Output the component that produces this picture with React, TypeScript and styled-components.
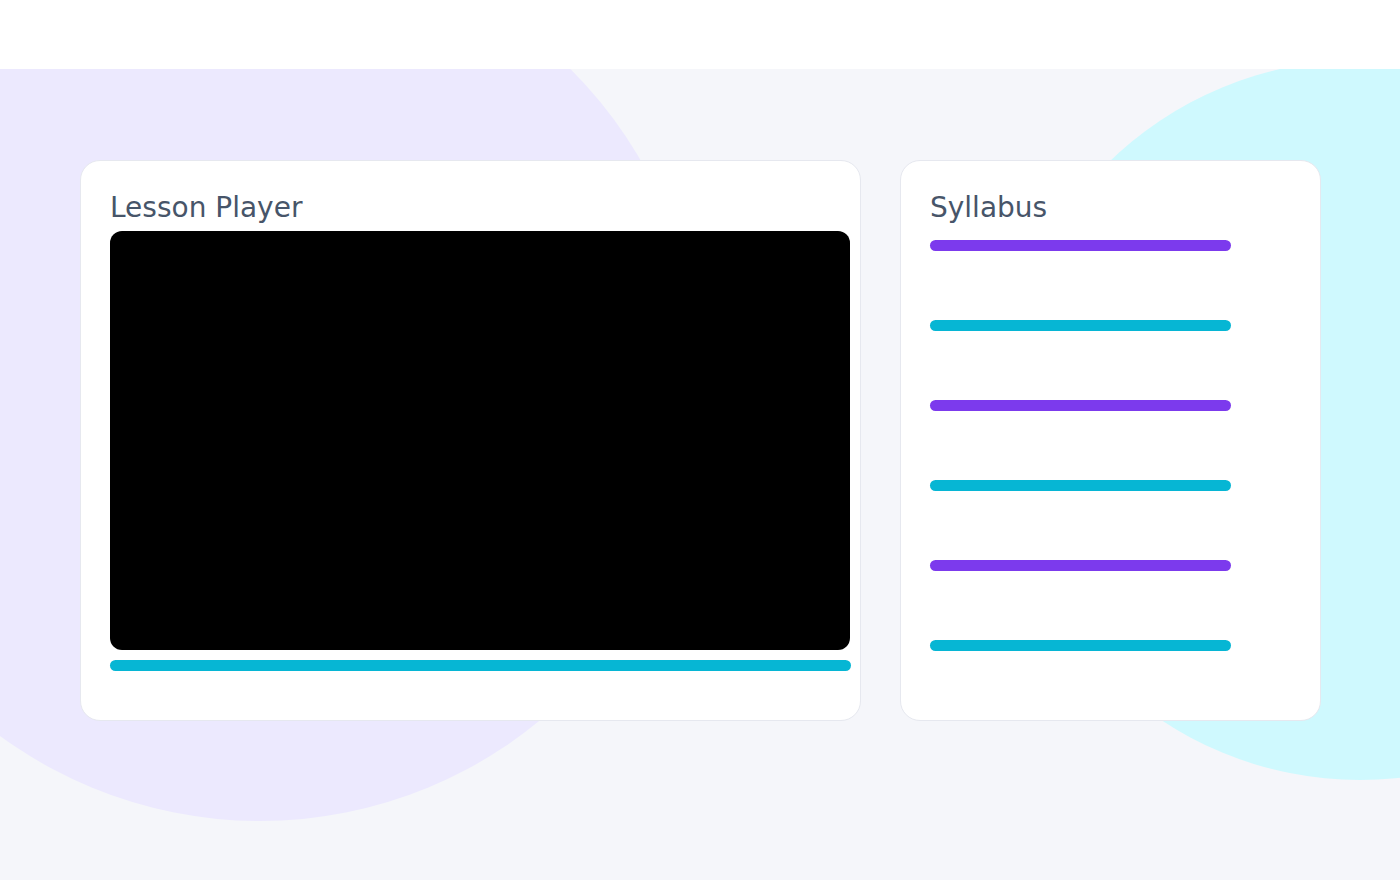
import React from "react";
import styled, { createGlobalStyle } from "styled-components";

const GlobalStyle = createGlobalStyle`
  * {
    box-sizing: border-box;
  }

  body {
    margin: 0;
    background: #f5f6fa;
    font-family: "DejaVu Sans", "Noto Sans", sans-serif;
  }
`;

const Header = styled.header`
  height: 69px;
  background: #ffffff;
  position: relative;
  z-index: 2;
`;

const Main = styled.main`
  position: relative;
  overflow: hidden;
  min-height: 811px;
  padding: 91px 80px;
`;

const Blob = styled.div<{ $size: number; $left: number; $top: number; $color: string }>`
  position: absolute;
  left: ${(p) => p.$left}px;
  top: ${(p) => p.$top}px;
  width: ${(p) => p.$size}px;
  height: ${(p) => p.$size}px;
  border-radius: 50%;
  background: ${(p) => p.$color};
  z-index: 0;
`;

const Layout = styled.div`
  position: relative;
  z-index: 1;
  display: grid;
  grid-template-columns: 781px 421px;
  gap: 39px;
`;

const Card = styled.section<{ $padRight?: number }>`
  height: 561px;
  background: #ffffff;
  border: 1px solid #e6e8ef;
  border-radius: 20px;
  padding: 29px ${(p) => p.$padRight ?? 29}px 29px 29px;
  display: flex;
  flex-direction: column;
`;

const Title = styled.h2`
  margin: 2px 0 7px;
  font-size: 28px;
  font-weight: 400;
  color: #475569;
  line-height: 32px;
`;

const Video = styled.div`
  width: 740px;
  height: 419px;
  background: #000000;
  border-radius: 12px;
`;

const Progress = styled.div`
  margin-top: 10px;
  width: 741px;
  height: 11px;
  border-radius: 6px;
  background: #06b6d4;
`;

const List = styled.ul`
  list-style: none;
  margin: 9px 0 0;
  padding: 0;
  display: flex;
  flex-direction: column;
  gap: 69px;
`;

const Item = styled.li<{ $color: string }>`
  width: 301px;
  height: 11px;
  border-radius: 6px;
  background: ${(p) => p.$color};
`;

const lessons = ["#7c3aed", "#06b6d4", "#7c3aed", "#06b6d4", "#7c3aed", "#06b6d4"];

export default function App() {
  return (
    <>
      <GlobalStyle />
      <Header />
      <Main>
        <Blob $size={880} $left={-180} $top={-128} $color="#ece9fe" />
        <Blob $size={720} $left={1000} $top={-9} $color="#cff9fe" />
        <Layout>
          <Card $padRight={10}>
            <Title>Lesson Player</Title>
            <Video />
            <Progress />
          </Card>
          <Card>
            <Title>Syllabus</Title>
            <List>
              {lessons.map((color, i) => (
                <Item key={i} $color={color} />
              ))}
            </List>
          </Card>
        </Layout>
      </Main>
    </>
  );
}
